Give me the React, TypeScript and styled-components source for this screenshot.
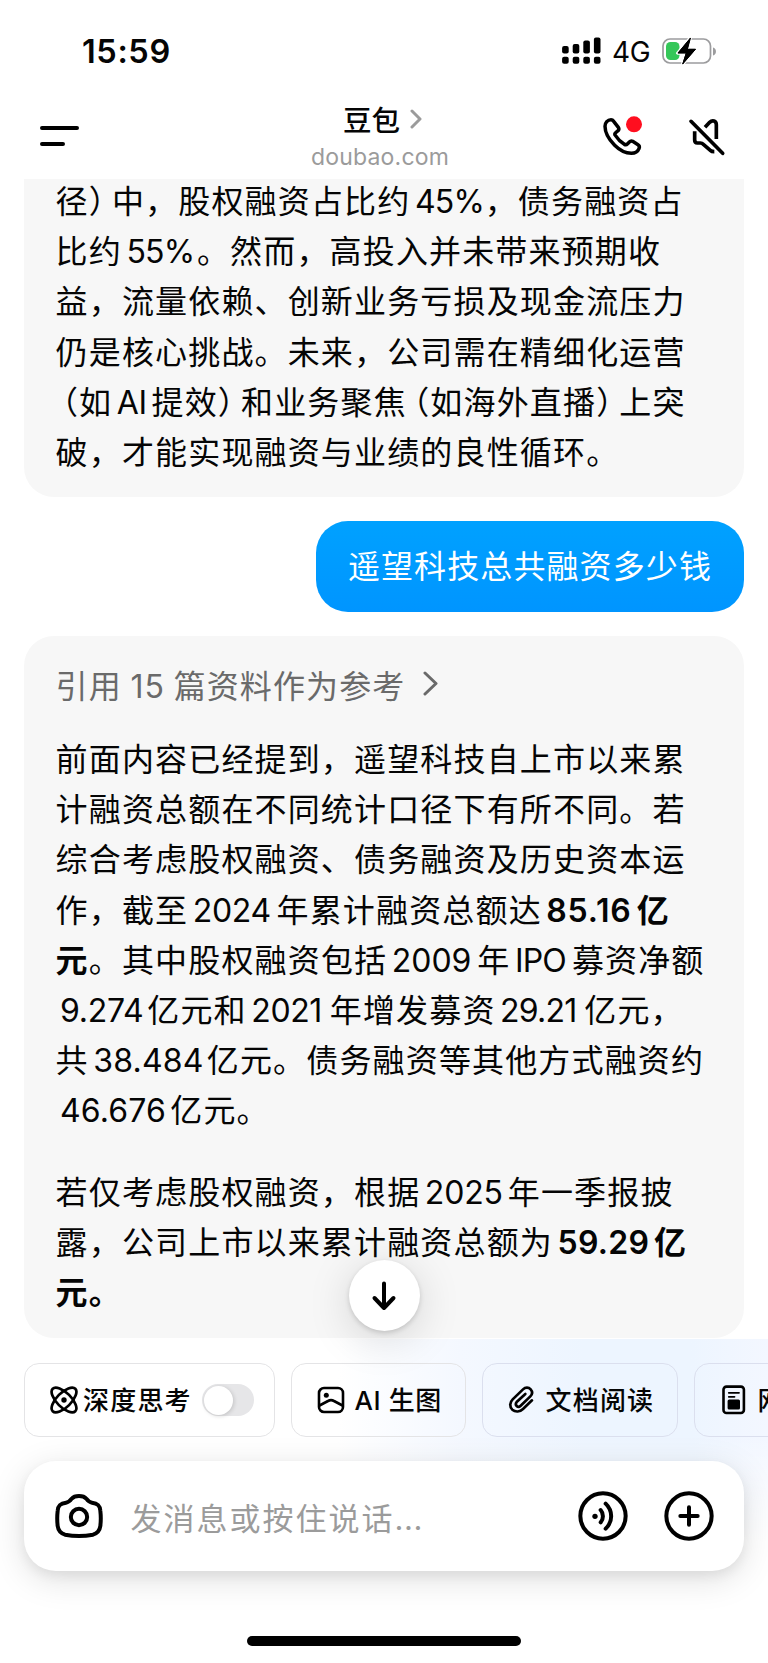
import React from 'react';
import styled, { createGlobalStyle } from 'styled-components';

const Global = createGlobalStyle`
  * { box-sizing: border-box; }
  body { margin: 0; background: #fff; }
`;

const Screen = styled.div`
  width: 768px;
  height: 1663px;
  overflow: hidden;
  display: flex;
  flex-direction: column;
  background: #fff;
  color: #050505;
  font-family: 'Inter', 'Noto Sans CJK SC', sans-serif;
`;

const StatusBar = styled.div`
  height: 100px;
  flex: none;
  display: flex;
  align-items: flex-start;
  justify-content: space-between;
  padding: 32px 51px 0 82px;
`;

const Clock = styled.div`
  font-size: 32.5px;
  line-height: 40px;
  font-weight: 600;
  letter-spacing: 0.6px;
`;

const StatusIcons = styled.div`
  display: flex;
  align-items: center;
  height: 38px;
`;

const Network = styled.span`
  margin: 2px 0 0 11px;
  width: 49px;
  font-size: 28px;
  line-height: 36px;
  letter-spacing: -0.3px;
`;

const NavBar = styled.div`
  height: 79px;
  flex: none;
  display: flex;
  justify-content: space-between;
  padding: 0 42px 0 39px;
`;

const NavSide = styled.div<{ $end?: boolean }>`
  width: ${p => (p.$end ? 170 : 165)}px;
  display: flex;
  justify-content: ${p => (p.$end ? 'flex-end' : 'flex-start')};
  gap: 43px;
  padding-top: 15px;
`;

const NavTitle = styled.div`
  display: flex;
  flex-direction: column;
  align-items: center;
`;

const TitleRow = styled.div`
  display: flex;
  align-items: center;
  height: 38px;
  gap: 10px;
  padding-left: 5px;
  font-size: 28.5px;
  font-weight: 500;
`;

const TitleText = styled.span`
  margin-top: -2px;
`;

const Domain = styled.div`
  font-size: 23px;
  line-height: 30px;
  margin-top: 4px;
  color: #9b9b9b;
  letter-spacing: 0.2px;
`;

const Chat = styled.main`
  height: 1160px;
  flex: none;
  display: flex;
  flex-direction: column;
  align-items: flex-start;
  padding: 0 24px;
  overflow: hidden;
`;

const Reply = styled.article<{ $continued?: boolean }>`
  width: 720px;
  flex: none;
  background: #f7f7f7;
  margin-top: ${p => (p.$continued ? '-2px' : '0')};
  padding: ${p => (p.$continued ? '0 31px 20px 31.6px' : '23px 31px 20px 31.6px')};
  border-radius: ${p => (p.$continued ? '0 0 30px 30px' : '30px')};
  height: ${p => (p.$continued ? '319.5px' : '702.5px')};
`;

const Question = styled.div`
  align-self: flex-end;
  flex: none;
  height: 91px;
  margin: 24.5px 0 23.5px;
  padding: 0 32px;
  border-radius: 32px;
  background: linear-gradient(#00a1ff, #0095ff);
  color: #fff;
  font-size: 32px;
  line-height: 91px;
  letter-spacing: 1.1px;
`;

const Sources = styled.div`
  display: flex;
  align-items: center;
  height: 50px;
  margin-bottom: 26.5px;
  color: #6a6a6a;
  font-size: 32px;
  letter-spacing: 1.1px;
  word-spacing: -1.5px;
  white-space: pre;
`;

const Paragraph = styled.div`
  margin-bottom: 31.5px;
`;

const Line = styled.div`
  height: 50.2px;
  line-height: 50.2px;
  font-size: 32px;
  letter-spacing: 1.16px;
  white-space: nowrap;
`;

const Latin = styled.span<{ $w: number; $bold?: boolean; $ls?: number }>`
  display: inline-block;
  width: ${p => p.$w}px;
  padding-left: 4.5px;
  letter-spacing: ${p => p.$ls ?? -0.3}px;
  font-weight: ${p => (p.$bold ? 600 : 400)};
`;

const Strong = styled.span`
  font-weight: 600;
`;

const Open = styled.span`
  font-feature-settings: 'halt';
  padding-left: 6.3px;
`;

const Close = styled.span`
  font-feature-settings: 'halt';
  padding-right: 6px;
`;

const Footer = styled.footer`
  position: relative;
  height: 324px;
  flex: none;
  display: flex;
  flex-direction: column;
  align-items: center;
  background:
    linear-gradient(to bottom, rgba(255, 255, 255, 0) 30%, #fff 62%),
    linear-gradient(to right, #fff 44%, #f4f8ff 60%, #edf5ff 76%, #edf5ff 90%, #f3f7ff 100%);
`;

const ScrollDown = styled.button`
  position: absolute;
  left: 348.5px;
  top: -79px;
  width: 71px;
  height: 71px;
  padding: 0;
  border: 0;
  border-radius: 50%;
  background: #fff;
  display: flex;
  align-items: center;
  justify-content: center;
  box-shadow: 0 2px 5px rgba(0, 0, 0, 0.15), 0 8px 44px rgba(0, 0, 0, 0.15);
`;

const Chips = styled.div`
  width: 768px;
  height: 74px;
  margin-top: 24px;
  flex: none;
  display: flex;
  gap: 16px;
  padding-left: 24px;
  overflow: hidden;
`;

const Chip = styled.div<{ $w: number; $tint?: boolean; $gap?: number }>`
  width: ${p => p.$w}px;
  flex: none;
  height: 74px;
  display: flex;
  align-items: center;
  gap: ${p => p.$gap ?? 10}px;
  padding-left: 24.5px;
  border: 1.5px solid ${p => (p.$tint ? '#dbdfee' : '#e4e4e6')};
  border-radius: 15px;
  font-size: 26px;
  font-weight: 500;
  letter-spacing: 1.2px;
  white-space: nowrap;
`;

const ChipLabel = styled.span<{ $tight?: boolean }>`
  line-height: 40px;
  margin-top: 1px;
  letter-spacing: ${p => (p.$tight ? '0.6px' : 'inherit')};
`;

const Toggle = styled.span`
  width: 52px;
  height: 32px;
  margin-left: 5px;
  border-radius: 16px;
  background: #e6e6e8;
  padding: 1.5px;
`;

const Knob = styled.span`
  display: block;
  width: 29px;
  height: 29px;
  border-radius: 50%;
  background: #fff;
  box-shadow: 1px 1px 4px rgba(0, 0, 0, 0.16);
`;

const Composer = styled.div`
  width: 720px;
  height: 110px;
  margin-top: 24px;
  flex: none;
  display: flex;
  align-items: center;
  padding: 0 30px;
  border-radius: 32px;
  background: #fff;
  box-shadow: 0 8px 34px rgba(0, 0, 0, 0.13), 0 5px 12px rgba(0, 0, 0, 0.06);
`;

const Placeholder = styled.span`
  flex: 1;
  margin: 1px 0 0 26.5px;
  color: #9b9b9b;
  font-size: 31px;
  letter-spacing: 2px;
`;

const Dots = styled.span`
  letter-spacing: 0.6px;
`;

const HomeIndicator = styled.div`
  width: 274px;
  height: 10px;
  margin-top: 65px;
  border-radius: 5px;
  background: #000;
`;

const Gap = styled.span<{ $w: number }>`
  width: ${p => p.$w}px;
  flex: none;
`;

function Chevron({ w, h, color, sw }: { w: number; h: number; color: string; sw: number }) {
  return (
    <svg width={w} height={h} fill="none" stroke={color} strokeWidth={sw} strokeLinecap="round" strokeLinejoin="round">
      <path d={`M2 2L${w - 2} ${h / 2}L2 ${h - 2}`} />
    </svg>
  );
}

function Signal() {
  const tops = [46.5, 44.5, 41, 38];
  return (
    <svg width="39" height="28" viewBox="561.5 37.5 39 28">
      {tops.map((t, i) => (
        <React.Fragment key={t}>
          <rect x={561.6 + i * 10.6} y={t} width="6.6" height={54 - t} rx="2" />
          <rect x={561.6 + i * 10.6} y="57.3" width="6.6" height="7" rx="2" />
        </React.Fragment>
      ))}
    </svg>
  );
}

function Battery() {
  return (
    <svg width="56" height="30" viewBox="661 36 56 30">
      <rect x="663" y="39" width="47.5" height="24" rx="7" fill="none" stroke="#9c9c9e" strokeWidth="1.7" />
      <path d="M713 47.5a4.2 4.2 0 0 1 0 8z" fill="#9c9c9e" />
      <rect x="666" y="42" width="13.5" height="18" rx="4.5" fill="#35c759" />
      <path d="M690.5 37.5L677.5 53.2h8.3l-3.6 11.5L696 49h-8.2z" fill="#000" stroke="#fff" strokeWidth="3" paintOrder="stroke" strokeLinejoin="round" />
      <path d="M690.5 38L678 53h8.3l-3.6 11L695.5 49.2h-8.2z" fill="#000" stroke="#000" strokeWidth="1" strokeLinejoin="round" />
    </svg>
  );
}

function PhoneIcon() {
  return (
    <svg width="42" height="42" viewBox="654 345 126 126" fill="none" stroke="#000" strokeWidth="10.5" strokeLinejoin="round">
      <path d="M663 379C663 368 671 359 681 359C684 359 687 361 689 364L703 382C706 386 705 390 701 393L696 397C692 400 691 403 694 406C701 417 710 426 721 433C725 435 728 434 731 431L736 426C739 423 742 422 746 424L762 434C767 437 767 441 765 446C761 456 752 460 742 460C730 460 712 456 692 436C673 417 663 398 663 379Z" />
      <circle cx="750" cy="373" r="24" fill="#ff0e1f" stroke="none" />
    </svg>
  );
}

function MuteIcon() {
  return (
    <svg width="39" height="42" viewBox="909 345 117 126" fill="none" stroke="#000" strokeWidth="11" strokeLinejoin="round">
      <path d="M921 364L1016 460" strokeLinecap="round" />
      <path d="M963 382L977 367C985 359 997 362 997 374V417" />
      <path d="M932 394V420C932 426 935 429 940 429H949C953 429 956 431 959 434L979 451C982 454 985 455 991 455" />
    </svg>
  );
}

function Atom() {
  return (
    <svg width="28" height="28" viewBox="0 0 28 28" fill="none" stroke="#000" strokeWidth="2.7">
      <ellipse cx="14" cy="14" rx="16" ry="7.2" transform="rotate(45 14 14)" />
      <ellipse cx="14" cy="14" rx="16" ry="7.2" transform="rotate(-45 14 14)" />
      <circle cx="14" cy="14" r="2.7" fill="#000" stroke="none" />
    </svg>
  );
}

function ImageIcon() {
  return (
    <svg width="28" height="28" viewBox="0 0 28 28" fill="none" stroke="#000" strokeWidth="2.6" strokeLinecap="round" strokeLinejoin="round">
      <rect x="2" y="2" width="24" height="24" rx="5" />
      <path d="M2.5 19.5L11 15Q14 13.3 17 15L25.5 19.5" />
      <circle cx="9.3" cy="9.2" r="2.5" fill="#000" stroke="none" />
    </svg>
  );
}

function Clip() {
  return (
    <svg width="28" height="30" viewBox="372 106 84 90" fill="none" stroke="#000" strokeWidth="8" strokeLinecap="round">
      <path d="M444 152L417 178C408 187 394 188 385 180C376 171 377 158 386 149L417 119C424 112 434 112 440 119C446 126 445 134 439 140L410 168C406 172 401 172 398 169C394 165 395 161 398 157L424 133" />
    </svg>
  );
}

function PageIcon() {
  return (
    <svg width="26" height="30" viewBox="-2 0 26 30" fill="none" stroke="#000" strokeWidth="2.6" strokeLinecap="round">
      <rect x="1.5" y="1.6" width="20.4" height="26.4" rx="3" />
      <path d="M6.8 7.8H17M6.8 11.8H12.5" strokeWidth="1.8" />
      <rect x="5.6" y="14.6" width="12.4" height="10" rx="1.5" fill="#000" stroke="none" />
    </svg>
  );
}

function Camera() {
  return (
    <svg width="50" height="46" viewBox="162 429 150 138" fill="none" stroke="#000" strokeWidth="12" strokeLinejoin="round">
      <path d="M237 438C248 438 254 440 259 446C264 453 268 457 276 458C294 460 300 467 301 482C303 500 303 512 301 528C299 543 291 550 279 554C252 559 222 559 195 554C183 550 175 543 173 528C171 512 171 500 173 482C174 467 180 460 198 458C206 457 210 453 215 446C220 440 226 438 237 438Z" />
      <circle cx="237" cy="501" r="24.5" />
    </svg>
  );
}

function Voice() {
  return (
    <svg width="50" height="50" viewBox="581 423 150 150" fill="none" stroke="#000" strokeWidth="12" strokeLinecap="round">
      <circle cx="656" cy="498" r="68" />
      <circle cx="632" cy="499" r="8" fill="#000" stroke="none" />
      <path d="M649 480C658 490 658 507 649 517M664 461C686 482 686 515 664 536" />
    </svg>
  );
}

function Plus() {
  return (
    <svg width="50" height="50" viewBox="840 423 150 150" fill="none" stroke="#000" strokeWidth="12" strokeLinecap="round">
      <circle cx="915" cy="498" r="68" />
      <path d="M889 498H941M915 472V524" />
    </svg>
  );
}

export default function App() {
  return (
    <Screen>
      <Global />
      <StatusBar>
        <Clock>15:59</Clock>
        <StatusIcons>
          <Signal />
          <Network>4G</Network>
          <Battery />
        </StatusIcons>
      </StatusBar>
      <NavBar>
        <NavSide>
          <svg width="41" height="42" fill="none" stroke="#000" strokeWidth="4" strokeLinecap="round">
            <path d="M3 13H38M3 29H24" />
          </svg>
        </NavSide>
        <NavTitle>
          <TitleRow>
            <TitleText>豆包</TitleText>
            <Chevron w={12} h={20} color="#9b9b9b" sw={3} />
          </TitleRow>
          <Domain>doubao.com</Domain>
        </NavTitle>
        <NavSide $end>
          <PhoneIcon />
          <MuteIcon />
        </NavSide>
      </NavBar>

      <Chat>
        <Reply $continued>
          <Line>径<Close>）</Close>中，股权融资占比约<Latin $w={74.3} $ls={-0.8}>45%</Latin>，债务融资占</Line>
          <Line>比约<Latin $w={75} $ls={-0.8}>55%</Latin>。然而，高投入并未带来预期收</Line>
          <Line>益，流量依赖、创新业务亏损及现金流压力</Line>
          <Line>仍是核心挑战。未来，公司需在精细化运营</Line>
          <Line><Open>（</Open>如<Latin $w={39.3}>AI</Latin>提效<Close>）</Close>和业务聚焦<Open>（</Open>如海外直播<Close>）</Close>上突</Line>
          <Line>破，才能实现融资与业绩的良性循环。</Line>
        </Reply>

        <Question>遥望科技总共融资多少钱</Question>

        <Reply>
          <Sources>
            引用 15 篇资料作为参考
            <Gap $w={18} />
            <Chevron w={15} h={25} color="#6a6a6a" sw={3} />
          </Sources>
          <Paragraph>
            <Line>前面内容已经提到，遥望科技自上市以来累</Line>
            <Line>计融资总额在不同统计口径下有所不同。若</Line>
            <Line>综合考虑股权融资、债务融资及历史资本运</Line>
            <Line>作，截至<Latin $w={88.3}>2024</Latin>年累计融资总额达<Latin $w={95} $bold $ls={0.8}>85.16</Latin><Strong>亿</Strong></Line>
            <Line><Strong>元</Strong>。其中股权融资包括<Latin $w={90} $ls={0}>2009</Latin>年<Latin $w={61.5} $ls={-0.8}>IPO</Latin>募资净额</Line>
            <Line><Latin $w={91.7}>9.274</Latin>亿元和<Latin $w={83} $ls={-0.4}>2021</Latin>年增发募资<Latin $w={88.7} $ls={-0.8}>29.21</Latin>亿元，</Line>
            <Line>共<Latin $w={118} $ls={0.2}>38.484</Latin>亿元。债务融资等其他方式融资约</Line>
            <Line><Latin $w={114.7} $ls={0.1}>46.676</Latin>亿元。</Line>
          </Paragraph>
          <Paragraph>
            <Line>若仅考虑股权融资，根据<Latin $w={87.4} $ls={-0.2}>2025</Latin>年一季报披</Line>
            <Line>露，公司上市以来累计融资总额为<Latin $w={101} $bold $ls={0.3}>59.29</Latin><Strong>亿</Strong></Line>
            <Line><Strong>元。</Strong></Line>
          </Paragraph>
        </Reply>
      </Chat>

      <Footer>
        <ScrollDown aria-label="回到底部">
          <svg width="26" height="30" fill="none" stroke="#000" strokeWidth="4" strokeLinecap="round" strokeLinejoin="round">
            <path d="M13 2.5V27M3.5 17L13 27L22.5 17" />
          </svg>
        </ScrollDown>
        <Chips>
          <Chip $w={251} $gap={5.5}>
            <Atom />
            <ChipLabel>深度思考</ChipLabel>
            <Toggle><Knob /></Toggle>
          </Chip>
          <Chip $w={175}>
            <ImageIcon />
            <ChipLabel $tight>AI 生图</ChipLabel>
          </Chip>
          <Chip $w={196} $tint>
            <Clip />
            <ChipLabel>文档阅读</ChipLabel>
          </Chip>
          <Chip $w={196} $tint $gap={12}>
            <PageIcon />
            <ChipLabel>网页摘要</ChipLabel>
          </Chip>
        </Chips>
        <Composer>
          <Camera />
          <Placeholder>发消息或按住说话<Dots>...</Dots></Placeholder>
          <Voice />
          <Gap $w={36} />
          <Plus />
        </Composer>
        <HomeIndicator />
      </Footer>
    </Screen>
  );
}
